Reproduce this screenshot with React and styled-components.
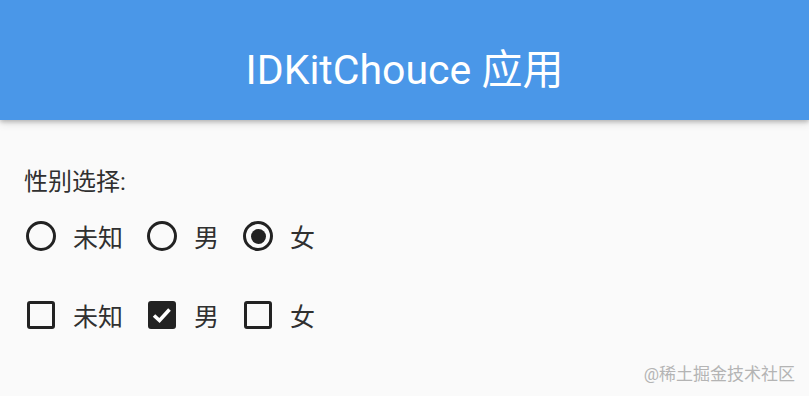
import React from 'react'
import styled, { createGlobalStyle } from 'styled-components'

const GlobalStyle = createGlobalStyle`
  html, body {
    margin: 0;
    padding: 0;
    background: #fafafa;
  }
  body {
    font-family: Roboto, "Noto Sans CJK SC", sans-serif;
  }
`;

const Page = styled.div`
  position: relative;
  width: 809px;
  height: 396px;
  background: #fafafa;
  overflow: hidden;
`;

const AppBar = styled.header`
  height: 120px;
  background: #4a97e8;
  display: flex;
  align-items: center;
  justify-content: center;
  box-shadow: 0 2px 4px rgba(0, 0, 0, 0.2), 0 4px 8px rgba(0, 0, 0, 0.1);
`;

const Title = styled.h1`
  margin: 0;
  color: #fff;
  font-size: 41px;
  font-weight: 400;
  padding-top: 12px;
`;

const Body = styled.main`
  padding: 45px 24px 0;
  display: flex;
  flex-direction: column;
`;

const Label = styled.div`
  font-size: 24px;
  color: #303030;
  line-height: 34px;
`;

const Row = styled.div`
  display: flex;
  align-items: center;
  gap: 22px;
  height: 50px;
  margin-top: ${p => p.$top}px;
`;

const Item = styled.div`
  display: flex;
  align-items: center;
  gap: 15px;
  font-size: 25px;
  color: #303030;
`;

const Slot = styled.span`
  width: 34px;
  display: flex;
  justify-content: center;
`;

const RadioRing = styled.span`
  box-sizing: border-box;
  width: 30px;
  height: 30px;
  border-radius: 50%;
  border: 3px solid #222;
  display: flex;
  align-items: center;
  justify-content: center;

  &::after {
    content: '';
    width: 15px;
    height: 15px;
    border-radius: 50%;
    background: #222;
    display: ${p => (p.$on ? 'block' : 'none')};
  }
`;

const Box = styled.span`
  box-sizing: border-box;
  width: 28px;
  height: 28px;
  border-radius: 3px;
  border: 3px solid #222;
  background: ${p => (p.$on ? '#222' : 'transparent')};
  display: flex;
  align-items: center;
  justify-content: center;
`;

const Watermark = styled.div`
  position: absolute;
  right: 14px;
  bottom: 11px;
  font-size: 17px;
  color: #b4b4b4;
`;

const Radio = ({ on, children }) => (
  <Item>
    <Slot><RadioRing $on={on} /></Slot>
    {children}
  </Item>
)

const Check = ({ on, children }) => (
  <Item>
    <Slot>
      <Box $on={on}>
        {on && (
          <svg width="22" height="22" viewBox="0 0 22 22">
            <path d="M3 11.5 L8.5 16.5 L18.5 5.5" fill="none" stroke="#fff" strokeWidth="3.6" />
          </svg>
        )}
      </Box>
    </Slot>
    {children}
  </Item>
)

export default function App() {
  return (
    <>
      <GlobalStyle />
      <Page>
        <AppBar>
          <Title>IDKitChouce 应用</Title>
        </AppBar>
        <Body>
          <Label>性别选择:</Label>
          <Row $top={12}>
            <Radio>未知</Radio>
            <Radio>男</Radio>
            <Radio on>女</Radio>
          </Row>
          <Row $top={29}>
            <Check>未知</Check>
            <Check on>男</Check>
            <Check>女</Check>
          </Row>
        </Body>
        <Watermark>@稀土掘金技术社区</Watermark>
      </Page>
    </>
  )
}
